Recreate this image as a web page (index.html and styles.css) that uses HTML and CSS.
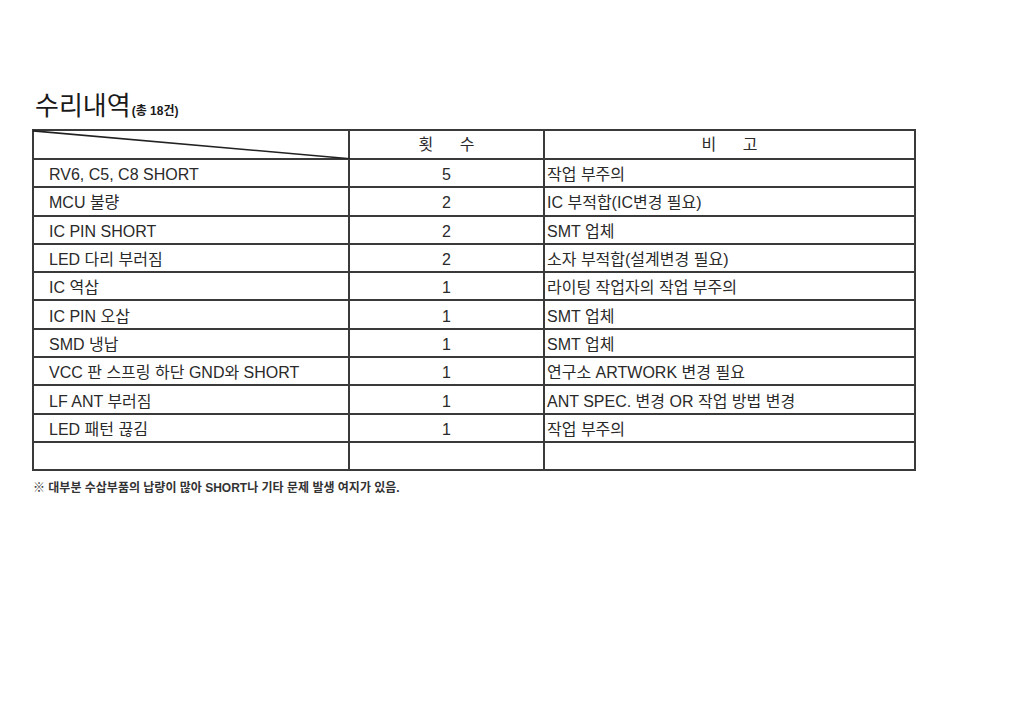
FILE: index.html
```html
<!DOCTYPE html>
<html lang="ko">
<head>
<meta charset="utf-8">
<link rel="stylesheet" href="styles.css">
</head>
<body>
<div class="page">
  <h1 class="title">수리내역<span class="count">(총 18건)</span></h1>
  <table class="repairs">
    <colgroup>
      <col class="c1"><col class="c2"><col class="c3">
    </colgroup>
    <thead>
      <tr class="head">
        <th class="diag"><svg class="diag-line" viewBox="0 0 316 29" preserveAspectRatio="none"><polygon points="0,0 316,28 316,29.5 0,1.8" fill="#222"/></svg></th>
        <th class="center">횟&nbsp;&nbsp;&nbsp;&nbsp;&nbsp;&nbsp;수</th>
        <th class="center">비&nbsp;&nbsp;&nbsp;&nbsp;&nbsp;&nbsp;고</th>
      </tr>
    </thead>
    <tbody>
      <tr><td class="name">RV6, C5, C8 SHORT</td><td class="center">5</td><td class="note">작업 부주의</td></tr>
      <tr><td class="name">MCU 불량</td><td class="center">2</td><td class="note">IC 부적합(IC변경 필요)</td></tr>
      <tr><td class="name">IC PIN SHORT</td><td class="center">2</td><td class="note">SMT 업체</td></tr>
      <tr><td class="name">LED 다리 부러짐</td><td class="center">2</td><td class="note">소자 부적합(설계변경 필요)</td></tr>
      <tr><td class="name">IC 역삽</td><td class="center">1</td><td class="note">라이팅 작업자의 작업 부주의</td></tr>
      <tr><td class="name">IC PIN 오삽</td><td class="center">1</td><td class="note">SMT 업체</td></tr>
      <tr><td class="name">SMD 냉납</td><td class="center">1</td><td class="note">SMT 업체</td></tr>
      <tr><td class="name">VCC 판 스프링 하단 GND와 SHORT</td><td class="center">1</td><td class="note">연구소 ARTWORK 변경 필요</td></tr>
      <tr><td class="name">LF ANT 부러짐</td><td class="center">1</td><td class="note">ANT SPEC. 변경 OR 작업 방법 변경</td></tr>
      <tr><td class="name">LED 패턴 끊김</td><td class="center">1</td><td class="note">작업 부주의</td></tr>
      <tr><td class="name"></td><td class="center"></td><td class="note"></td></tr>
    </tbody>
  </table>
  <p class="footnote">※ 대부분 수삽부품의 납량이 많아 SHORT나 기타 문제 발생 여지가 있음.</p>
</div>
</body>
</html>
```

FILE: styles.css
```css
html, body {
  margin: 0;
  padding: 0;
  background: #fff;
}
body {
  font-family: "Liberation Sans", "Noto Sans CJK KR", sans-serif;
  color: #222;
}
.page {
  padding: 86px 0 0 32px;
  width: 882px;
}
.title {
  margin: 0 0 0 3px;
  font-family: "Noto Sans CJK KR", sans-serif;
  font-weight: 400;
  font-size: 26px;
  line-height: 36px;
  color: #1a1a1a;
}
.count {
  font-family: "Liberation Sans", "Noto Sans CJK KR", sans-serif;
  font-weight: 700;
  font-size: 12px;
  margin-left: 1px;
}
.repairs {
  border-collapse: collapse;
  table-layout: fixed;
  width: 882px;
  font-size: 16px;
  line-height: 18px;
}
.c1 { width: 316px; }
.c2 { width: 195px; }
.c3 { width: 371px; }
.repairs th,
.repairs td {
  border: 2px solid #3a3a3a;
  padding: 0;
  font-weight: 400;
  white-space: nowrap;
  color: #2a2a2a;
  vertical-align: middle;
}
.repairs td {
  padding-top: 4px;
  height: 22.3px;
}
.repairs .head th {
  height: 27px;
}
.diag {
  position: relative;
}
.diag-line {
  position: absolute;
  left: -1px;
  top: -1px;
  width: 317px;
  height: 29px;
}
.repairs .center {
  text-align: center;
}
.repairs .name {
  padding-left: 15px;
}
.repairs .note {
  padding-left: 2px;
}
.footnote {
  margin: 7px 0 0 1px;
  font-family: "Liberation Sans", "Noto Sans CJK KR", sans-serif;
  font-weight: 700;
  font-size: 12px;
  color: #333;
}
```
